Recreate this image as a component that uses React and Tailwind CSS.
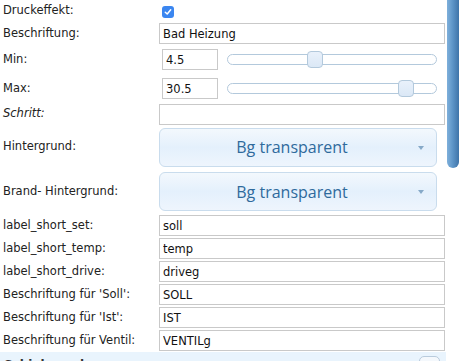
import React from 'react';

const rows = [
  { label: 'label_short_set:', value: 'soll' },
  { label: 'label_short_temp:', value: 'temp' },
  { label: 'label_short_drive:', value: 'driveg' },
  { label: "Beschriftung für 'Soll':", value: 'SOLL' },
  { label: "Beschriftung für 'Ist':", value: 'IST' },
  { label: 'Beschriftung für Ventil:', value: 'VENTILg' },
];

function Row({ label, h, italic, children }) {
  return (
    <div className={`flex shrink-0 items-center ${h}`}>
      <div className={`w-[159px] shrink-0 pl-[3px] text-[#222] ${italic ? 'italic' : ''}`}>{label}</div>
      <div className="flex flex-1 items-center">{children}</div>
    </div>
  );
}

function TextInput({ value, w = 'w-[286px]' }) {
  return (
    <input
      readOnly
      value={value}
      className={`h-[21px] ${w} border border-[#c9c9c9] bg-white px-[3px] text-[11.5px] text-[#111] outline-none`}
    />
  );
}

function Slider({ thumb }) {
  return (
    <div className="relative ml-[9px] h-[11px] w-[210px] rounded-full border border-[#b3c9dc] bg-white">
      <div className={`absolute top-[-4px] ${thumb} h-[17px] w-[16px] rounded-[4px] border border-[#b3c9dc] bg-gradient-to-b from-[#e9f1fb] to-[#dbe8f6]`} />
    </div>
  );
}

function Select({ value }) {
  return (
    <div className="relative flex h-[39px] w-[278px] items-center justify-center rounded-[6px] border border-[#c9dced] bg-gradient-to-b from-[#f3f8fd] via-[#e4f0fc] to-[#eef5fd] pr-[12px]">
      <span className="font-['Open_Sans',sans-serif] text-[16px] text-[#2f6a9c]">{value}</span>
      <span className="absolute right-[12px] top-[17px] h-0 w-0 border-x-[3px] border-t-[4px] border-x-transparent border-t-[#86a9c8]" />
    </div>
  );
}

export default function App() {
  return (
    <div className="flex h-[361px] w-[459px] overflow-hidden bg-white font-['DejaVu_Sans',sans-serif] text-[11.5px]">
      <div className="flex w-[446px] shrink-0 flex-col">
        <Row label="Druckeffekt:" h="h-[22px]">
          <div className="ml-[3px] mt-[2px] flex h-[12px] w-[12px] items-center justify-center rounded-[3px] bg-[#3b86f0]">
            <svg width="8" height="8" viewBox="0 0 8 8">
              <path d="M1.3 4.2 L3.2 6 L6.7 1.8" fill="none" stroke="white" strokeWidth="1.5" strokeLinecap="round" strokeLinejoin="round" />
            </svg>
          </div>
        </Row>
        <Row label="Beschriftung:" h="h-[23px]">
          <TextInput value="Bad Heizung" />
        </Row>
        <Row label="Min:" h="h-[29px]">
          <div className="ml-[3px] flex items-center">
            <TextInput value="4.5" w="w-[56px]" />
            <Slider thumb="left-[79px]" />
          </div>
        </Row>
        <Row label="Max:" h="h-[29px]">
          <div className="ml-[3px] flex items-center">
            <TextInput value="30.5" w="w-[56px]" />
            <Slider thumb="left-[170px]" />
          </div>
        </Row>
        <Row label="Schritt:" h="h-[22px]" italic>
          <TextInput value="" />
        </Row>
        <Row label="Hintergrund:" h="h-[44px]">
          <Select value="Bg transparent" />
        </Row>
        <Row label="Brand- Hintergrund:" h="h-[45px]">
          <Select value="Bg transparent" />
        </Row>
        {rows.map((r) => (
          <Row key={r.label} label={r.label} h="h-[23px]">
            <TextInput value={r.value} />
          </Row>
        ))}
        <div className="flex h-[30px] shrink-0 items-start bg-[#e9f4fd] pl-[4px] pr-[6px] pt-[4px]">
          <span className="flex-1 text-[12px] font-bold text-[#333]">Schieberegler</span>
          <div className="h-[20px] w-[21px] rounded-[5px] border border-[#b9cbdc] bg-[#f4f8fc]" />
        </div>
      </div>
      <div className="flex w-[13px] shrink-0 flex-col pl-[1px]">
        <div className="h-[168px] w-[12px] rounded-b-full bg-gradient-to-r from-[#7fb0db] via-[#5b93c6] to-[#3f74a8]" />
      </div>
    </div>
  );
}
